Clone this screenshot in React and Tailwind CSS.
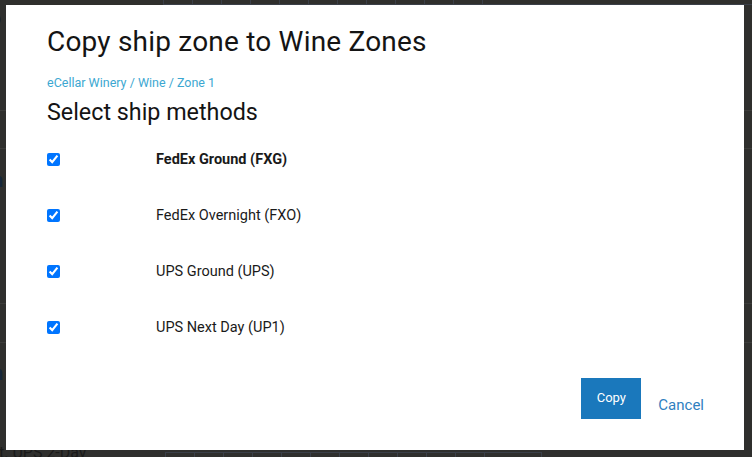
import React from 'react';

const methods = [
    { label: 'FedEx Ground (FXG)', bold: true },
    { label: 'FedEx Overnight (FXO)' },
    { label: 'UPS Ground (UPS)' },
    { label: 'UPS Next Day (UP1)' },
];

const states = ['SC', 'SD', 'TN', 'TX', 'UT', 'VT', 'VA', 'WA', 'WV', 'WI', 'WY'];

// Faded page behind the overlay
const Backdrop = () => (
    <div className="absolute inset-0 text-[#1a1a19] text-[20px] leading-[22px]">
        <div className="flex ml-[163px] -mt-[10px] h-[15px] border-b border-[#3a3f48]">
            {states.map((s) => (
                <div key={s} className="w-[29px] border-l border-[#3a3f48] text-[11px] leading-[13px] text-[#1c2330] text-center">{s}</div>
            ))}
            <div className="w-[1px] border-l border-[#3a3f48]" />
        </div>
        <div className="-ml-[10px] mt-[2px] h-[22px]">o</div>
        <div className="-ml-[12px] h-[22px]">t,</div>
        <div className="h-[1px] bg-[#3c3c3a] mt-[59px]" />
        <div className="h-[1px] bg-[#3c3c3a] mt-[37px]" />
        <div className="-ml-[8px] mt-[20px] h-[22px] text-[#16263a] font-bold">h</div>
        <div className="-ml-[12px] mt-[8px] h-[22px]">a</div>
        <div className="-ml-[12px] mt-[3px] h-[22px]">t,</div>
        <div className="h-[1px] bg-[#3c3c3a] mt-[57px]" />
        <div className="h-[1px] bg-[#3c3c3a] mt-[38px]" />
        <div className="-ml-[8px] mt-[19px] h-[22px] text-[#16263a] font-bold">h</div>
        <div className="-ml-[12px] mt-[10px] h-[22px]">u</div>
        <div className="-ml-[12px] mt-[3px] h-[22px]">E</div>
        <div className="flex items-start h-[22px]">
            <div className="w-[166px] shrink-0 text-[16px] leading-[20px] mt-[2px] -ml-[1px]">t. UPS 2-Day</div>
            <div className="flex mt-[11px] h-[10px] border-t border-[#3a3f48]">
                {states.slice(0, 13).map((s) => (
                    <div key={s} className="w-[29px] border-l border-[#3a3f48]" />
                ))}
                <div className="w-[58px] border-l border-r border-[#3a3f48]" />
            </div>
        </div>
    </div>
);

export default function App() {
    return (
        <div className="relative w-[752px] h-[457px] overflow-hidden bg-[#2f2f2d] font-['Roboto',sans-serif]">
            <Backdrop />

            {/* Modal */}
            <div className="absolute left-[6px] top-[5px] w-[738px] h-[445px] bg-white pl-[41px] pr-[40px] pt-[19px]">
                <h1 className="text-[28px] leading-[36px] text-[#141414] tracking-[0.2px]">Copy ship zone to Wine Zones</h1>
                <div className="mt-[15px] text-[12.5px] leading-[16px] text-[#3ca7d1]">eCellar Winery / Wine / Zone 1</div>
                <h2 className="mt-[6px] text-[23.3px] leading-[30px] text-[#141414]">Select ship methods</h2>

                <div className="mt-[20px] flex flex-col">
                    {methods.map((m) => (
                        <div key={m.label} className="flex items-start h-[56px]">
                            <input type="checkbox" defaultChecked className="mt-[6px] ml-0 w-[13px] h-[13px] accent-[#0075ff]" />
                            <span className={`ml-[96px] mt-[3px] text-[14.5px] leading-[20px] text-[#1a1a1a] ${m.bold ? 'font-bold' : ''}`}>{m.label}</span>
                        </div>
                    ))}
                </div>

                <div className="absolute right-[40px] top-[373px] flex items-start gap-[17px]">
                    <button className="w-[60px] h-[41px] bg-[#1a78bc] text-white text-[13px] pb-[2px]">Copy</button>
                    <button className="mt-[17px] text-[15px] leading-[20px] text-[#2f80bf]">Cancel</button>
                </div>
            </div>
        </div>
    );
}
